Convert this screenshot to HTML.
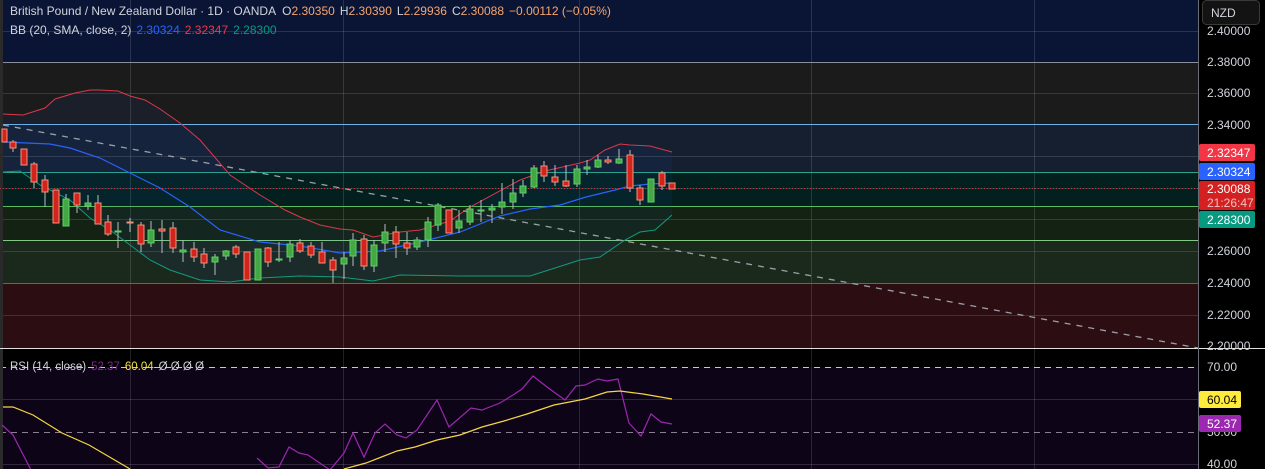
<!DOCTYPE html>
<html><head><meta charset="utf-8"><style>
html,body{margin:0;padding:0;background:#000;width:1265px;height:469px;overflow:hidden}
svg{display:block}
text{font-family:"Liberation Sans",sans-serif}
</style></head><body>
<svg width="1265" height="469" xmlns="http://www.w3.org/2000/svg">
<rect x="0" y="0" width="1200" height="62" fill="#0a1535"/>
<rect x="0" y="62" width="1200" height="62" fill="#1b1b1c"/>
<rect x="0" y="124" width="1200" height="48" fill="#151f30"/>
<rect x="0" y="172" width="1200" height="34" fill="#04201e"/>
<rect x="0" y="206" width="1200" height="34" fill="#132213"/>
<rect x="0" y="240" width="1200" height="43" fill="#1b281c"/>
<rect x="0" y="283" width="1200" height="65" fill="#2c0d12"/>
<g stroke="#ffffff" stroke-opacity="0.13" stroke-width="1">
<line x1="0" y1="31.5" x2="1200" y2="31.5"/><line x1="0" y1="93.5" x2="1200" y2="93.5"/><line x1="0" y1="156.5" x2="1200" y2="156.5"/><line x1="0" y1="188.5" x2="1200" y2="188.5"/><line x1="0" y1="219.5" x2="1200" y2="219.5"/><line x1="0" y1="251.5" x2="1200" y2="251.5"/><line x1="0" y1="315.5" x2="1200" y2="315.5"/>
<line x1="130.5" y1="0" x2="130.5" y2="469"/><line x1="343.5" y1="0" x2="343.5" y2="469"/><line x1="579.5" y1="0" x2="579.5" y2="469"/><line x1="811.5" y1="0" x2="811.5" y2="469"/><line x1="1034.5" y1="0" x2="1034.5" y2="469"/>
</g>
<line x1="0" y1="62.5" x2="1200" y2="62.5" stroke="#8a8f99"/>
<line x1="0" y1="124.5" x2="1200" y2="124.5" stroke="#6db3e8"/>
<line x1="0" y1="172.5" x2="1200" y2="172.5" stroke="#2aa58a"/>
<line x1="0" y1="206.5" x2="1200" y2="206.5" stroke="#5cb85c"/>
<line x1="0" y1="240.5" x2="1200" y2="240.5" stroke="#82c882"/>
<line x1="0" y1="283.5" x2="1200" y2="283.5" stroke="#d2353f"/>
<rect x="0" y="0" width="3" height="348" fill="#2a2a2a"/>
<polygon fill="#2962ff" fill-opacity="0.06" points="3,114 23,115 45,108 55,99 75,93 90,90 100,90 118,91 130,96 145,100 160,109 180,123 200,140 230,175 260,195 285,210 300,217 320,225 340,229 353,230 373,237 400,232 420,230 450,221 470,207 520,180 545,171 580,163 590,160 605,150 620,144 630,145 650,146 672,152 672,215 655,230 640,232 625,240 600,257 580,260 530,276 460,276 400,275 373,281 340,277 300,276 260,278 230,282 200,280 170,270 150,260 130,245 110,230 90,218 70,200 40,185 20,171 3,172"/>
<polyline fill="none" stroke="#d9394a" stroke-width="1" points="3,114 23,115 45,108 55,99 75,93 90,90 100,90 118,91 130,96 145,100 160,109 180,123 200,140 230,175 260,195 285,210 300,217 320,225 340,229 353,230 373,237 400,232 420,230 450,221 470,207 520,180 545,171 580,163 590,160 605,150 620,144 630,145 650,146 672,152"/>
<polyline fill="none" stroke="#2962ff" stroke-width="1.2" points="3,142 50,144 70,148 100,158 130,173 160,188 190,207 220,230 260,242 300,246 340,253 380,251 420,242 460,232 500,216 530,209 560,205 586,197 615,190 630,186 650,184 672,183"/>
<polyline fill="none" stroke="#119c80" stroke-width="1" points="3,172 20,171 40,185 70,200 90,218 110,230 130,245 150,260 170,270 200,280 230,282 260,278 300,276 340,277 373,281 400,275 460,276 530,276 580,260 600,257 625,240 640,232 655,230 672,215"/>
<line x1="3" y1="125" x2="1198" y2="348" stroke="#9aa0a8" stroke-width="1.3" stroke-dasharray="6,6"/>
<line x1="0" y1="188.5" x2="1200" y2="188.5" stroke="#d2353f" stroke-dasharray="1,2"/>
<g stroke="#b8bcc4">
<line x1="13" y1="140" x2="13" y2="152"/><line x1="34" y1="162" x2="34" y2="188"/><line x1="45" y1="175" x2="45" y2="207"/><line x1="66" y1="194" x2="66" y2="226"/><line x1="77" y1="193" x2="77" y2="213"/><line x1="88" y1="195" x2="88" y2="210"/><line x1="98" y1="195" x2="98" y2="224"/><line x1="108" y1="215" x2="108" y2="236"/><line x1="118" y1="222" x2="118" y2="248"/><line x1="130" y1="218" x2="130" y2="232"/><line x1="141" y1="222" x2="141" y2="252"/><line x1="151" y1="221" x2="151" y2="247"/><line x1="162" y1="220" x2="162" y2="253"/><line x1="173" y1="222" x2="173" y2="253"/><line x1="183" y1="240" x2="183" y2="262"/><line x1="194" y1="242" x2="194" y2="262"/><line x1="204" y1="248" x2="204" y2="268"/><line x1="215" y1="254" x2="215" y2="275"/><line x1="226" y1="250" x2="226" y2="260"/><line x1="236" y1="245" x2="236" y2="258"/><line x1="268" y1="247" x2="268" y2="267"/><line x1="279" y1="242" x2="279" y2="262"/><line x1="290" y1="240" x2="290" y2="262"/><line x1="300" y1="239" x2="300" y2="253"/><line x1="311" y1="242" x2="311" y2="258"/><line x1="322" y1="242" x2="322" y2="263"/><line x1="333" y1="257" x2="333" y2="283"/><line x1="344" y1="252" x2="344" y2="279"/><line x1="353" y1="233" x2="353" y2="266"/><line x1="364" y1="235" x2="364" y2="270"/><line x1="374" y1="240" x2="374" y2="272"/><line x1="385" y1="224" x2="385" y2="252"/><line x1="396" y1="226" x2="396" y2="258"/><line x1="407" y1="232" x2="407" y2="255"/><line x1="417" y1="237" x2="417" y2="250"/><line x1="428" y1="217" x2="428" y2="247"/><line x1="438" y1="203" x2="438" y2="231"/><line x1="459" y1="210" x2="459" y2="233"/><line x1="470" y1="205" x2="470" y2="225"/><line x1="481" y1="200" x2="481" y2="222"/><line x1="492" y1="204" x2="492" y2="223"/><line x1="502" y1="183" x2="502" y2="214"/><line x1="513" y1="179" x2="513" y2="209"/><line x1="523" y1="180" x2="523" y2="197"/><line x1="534" y1="165" x2="534" y2="188"/><line x1="544" y1="161" x2="544" y2="182"/><line x1="555" y1="165" x2="555" y2="186"/><line x1="566" y1="165" x2="566" y2="187"/><line x1="577" y1="165" x2="577" y2="187"/><line x1="587" y1="160" x2="587" y2="175"/><line x1="598" y1="155" x2="598" y2="168"/><line x1="608" y1="156" x2="608" y2="164"/><line x1="619" y1="149" x2="619" y2="164"/><line x1="630" y1="150" x2="630" y2="192"/><line x1="640" y1="185" x2="640" y2="205"/><line x1="662" y1="171" x2="662" y2="190"/>
</g>
<g stroke="#f0937a" fill="#d3231d">
<rect x="2" y="129" width="5" height="13"/><rect x="10" y="142" width="6" height="6"/><rect x="21" y="149" width="6" height="16"/><rect x="31" y="164" width="6" height="18"/><rect x="42" y="180" width="6" height="12"/><rect x="53" y="190" width="6" height="33"/><rect x="74" y="193" width="6" height="12"/><rect x="95" y="203" width="6" height="21"/><rect x="105" y="222" width="6" height="12"/><rect x="138" y="225" width="6" height="19"/><rect x="170" y="228" width="6" height="20"/><rect x="191" y="249" width="6" height="8"/><rect x="201" y="254" width="6" height="9"/><rect x="233" y="247" width="6" height="7"/><rect x="244" y="252" width="6" height="28"/><rect x="265" y="248" width="6" height="14"/><rect x="297" y="243" width="6" height="8"/><rect x="308" y="246" width="6" height="9"/><rect x="319" y="252" width="6" height="11"/><rect x="330" y="260" width="6" height="10"/><rect x="361" y="239" width="6" height="27"/><rect x="393" y="232" width="6" height="12"/><rect x="404" y="243" width="6" height="5"/><rect x="446" y="210" width="6" height="23"/><rect x="541" y="166" width="6" height="10"/><rect x="552" y="177" width="6" height="5"/><rect x="563" y="181" width="6" height="5"/><rect x="605" y="160" width="6" height="2"/><rect x="627" y="155" width="6" height="33"/><rect x="637" y="188" width="6" height="12"/><rect x="659" y="173" width="6" height="13"/><rect x="669" y="183" width="6" height="6"/>
<rect x="127" y="222" width="6" height="1"/><rect x="159" y="229" width="6" height="2"/>
</g>
<g stroke="#5fd068" fill="#43a843">
<rect x="63" y="199" width="6" height="27"/><rect x="85" y="203" width="6" height="3"/><rect x="115" y="231" width="6" height="1"/><rect x="148" y="230" width="6" height="13"/><rect x="180" y="250" width="6" height="2"/><rect x="212" y="257" width="6" height="5"/><rect x="223" y="251" width="6" height="5"/><rect x="255" y="249" width="6" height="31"/><rect x="276" y="259" width="6" height="1"/><rect x="287" y="244" width="6" height="13"/><rect x="341" y="258" width="6" height="6"/><rect x="350" y="240" width="6" height="16"/><rect x="371" y="245" width="6" height="21"/><rect x="382" y="232" width="6" height="11"/><rect x="414" y="240" width="6" height="7"/><rect x="425" y="222" width="6" height="18"/><rect x="435" y="205" width="6" height="20"/><rect x="456" y="221" width="6" height="7"/><rect x="467" y="209" width="6" height="13"/><rect x="478" y="210" width="6" height="1"/><rect x="489" y="208" width="6" height="2"/><rect x="499" y="202" width="6" height="5"/><rect x="510" y="193" width="6" height="9"/><rect x="520" y="186" width="6" height="7"/><rect x="531" y="168" width="6" height="19"/><rect x="574" y="169" width="6" height="15"/><rect x="584" y="167" width="6" height="2"/><rect x="595" y="160" width="6" height="7"/><rect x="616" y="159" width="6" height="4"/><rect x="648" y="179" width="6" height="23"/>
</g>
<text x="10" y="15" font-size="12" fill="#d1d4dc">British Pound / New Zealand Dollar · 1D · OANDA<tspan dx="6">O</tspan><tspan fill="#f7a56f">2.30350</tspan><tspan dx="5">H</tspan><tspan fill="#f7a56f">2.30390</tspan><tspan dx="5">L</tspan><tspan fill="#f7a56f">2.29936</tspan><tspan dx="5">C</tspan><tspan fill="#f7a56f">2.30088</tspan><tspan dx="5" fill="#f7a56f">−0.00112 (−0.05%)</tspan></text>
<text x="10" y="34" font-size="12" fill="#d1d4dc">BB (20, SMA, close, 2)<tspan dx="5" fill="#2962ff">2.30324</tspan><tspan dx="5" fill="#f23645">2.32347</tspan><tspan dx="5" fill="#089981">2.28300</tspan></text>
<rect x="0" y="349" width="1200" height="120" fill="#0e0418"/>
<rect x="0" y="349" width="1200" height="18" fill="#000"/>
<line x1="0" y1="367.5" x2="1200" y2="367.5" stroke="#c8c8c8" stroke-dasharray="6,5"/>
<line x1="0" y1="432.5" x2="1200" y2="432.5" stroke="#8a8090" stroke-dasharray="6,5"/>
<line x1="0" y1="399.5" x2="1200" y2="399.5" stroke="#ffffff" stroke-opacity="0.15"/>
<line x1="0" y1="464.5" x2="1200" y2="464.5" stroke="#ffffff" stroke-opacity="0.15"/>
<g stroke="#ffffff" stroke-opacity="0.13"><line x1="130.5" y1="349" x2="130.5" y2="469"/><line x1="343.5" y1="349" x2="343.5" y2="469"/><line x1="579.5" y1="349" x2="579.5" y2="469"/><line x1="811.5" y1="349" x2="811.5" y2="469"/><line x1="1034.5" y1="349" x2="1034.5" y2="469"/></g>
<rect x="0" y="349" width="3" height="120" fill="#2a2a2a"/>
<polyline fill="none" stroke="#9c27b0" stroke-width="1.2" points="2,425 13,435 31,470"/>
<polyline fill="none" stroke="#9c27b0" stroke-width="1.2" points="257,458 268,468 279,467 289,447 299,453 308,455 330,470 344,453 353,433 364,457 375,433 385,424 397,435 406,438 417,430 437,400 449,427 471,408 482,410 500,403 513,395 522,389 533,376 547,387 565,400 576,386 585,385 598,379 607,381 618,379 629,423 641,436 651,414 661,422 672,424"/>
<polyline fill="none" stroke="#f5d742" stroke-width="1.2" points="3,407 13,407 33,415 62,433 89,445 130,469"/>
<polyline fill="none" stroke="#f5d742" stroke-width="1.2" points="344,469 366,463 397,451 415,447 437,440 460,435 482,427 504,421 527,414 554,405 585,399 607,392 620,391 643,394 672,399"/>
<text x="10" y="370" font-size="11.5" fill="#d1d4dc">RSI (14, close)<tspan dx="5" fill="#7b2a8c">52.37</tspan><tspan dx="5" fill="#f5e04a">60.04</tspan><tspan dx="5">Ø Ø Ø Ø</tspan></text>
<line x1="0" y1="348.5" x2="1265" y2="348.5" stroke="#e0e0e0"/>
<line x1="1198.5" y1="0" x2="1198.5" y2="469" stroke="#6a6d75"/>
<rect x="1199" y="0" width="66" height="348" fill="#000"/>
<rect x="1199" y="349" width="66" height="120" fill="#000"/>
<rect x="1202.5" y="0.5" width="57" height="24" rx="4" fill="#131313" stroke="#3a3a3a"/>
<text x="1211" y="17" font-size="12" fill="#d1d4dc">NZD</text>
<g font-size="12" fill="#d1d4dc">
<text x="1207" y="35">2.40000</text><text x="1207" y="66">2.38000</text><text x="1207" y="97">2.36000</text><text x="1207" y="129">2.34000</text><text x="1207" y="255">2.26000</text><text x="1207" y="287">2.24000</text><text x="1207" y="319">2.22000</text><text x="1207" y="350">2.20000</text>
<text x="1207" y="371">70.00</text><text x="1207" y="468">40.00</text><text x="1207" y="436">50.00</text>
</g>
<rect x="1199" y="144" width="56" height="17" rx="2" fill="#f23645"/>
<text x="1207" y="157" font-size="12" fill="#fff">2.32347</text>
<rect x="1199" y="163" width="56" height="17" rx="2" fill="#2962ff"/>
<text x="1207" y="176" font-size="12" fill="#fff">2.30324</text>
<rect x="1199" y="181" width="56" height="29" rx="2" fill="#d32020"/>
<text x="1207" y="193" font-size="12" fill="#fff">2.30088</text>
<text x="1207" y="207" font-size="12" fill="#f3c0c0">21:26:47</text>
<rect x="1199" y="211" width="56" height="17" rx="2" fill="#089981"/>
<text x="1207" y="224" font-size="12" fill="#fff">2.28300</text>
<rect x="1199" y="391" width="42" height="17" rx="2" fill="#ffeb3b"/>
<text x="1207" y="404" font-size="12" fill="#000">60.04</text>
<rect x="1199" y="415" width="42" height="17" rx="2" fill="#9c27b0"/>
<text x="1207" y="428" font-size="12" fill="#fff">52.37</text>
</svg>
</body></html>
